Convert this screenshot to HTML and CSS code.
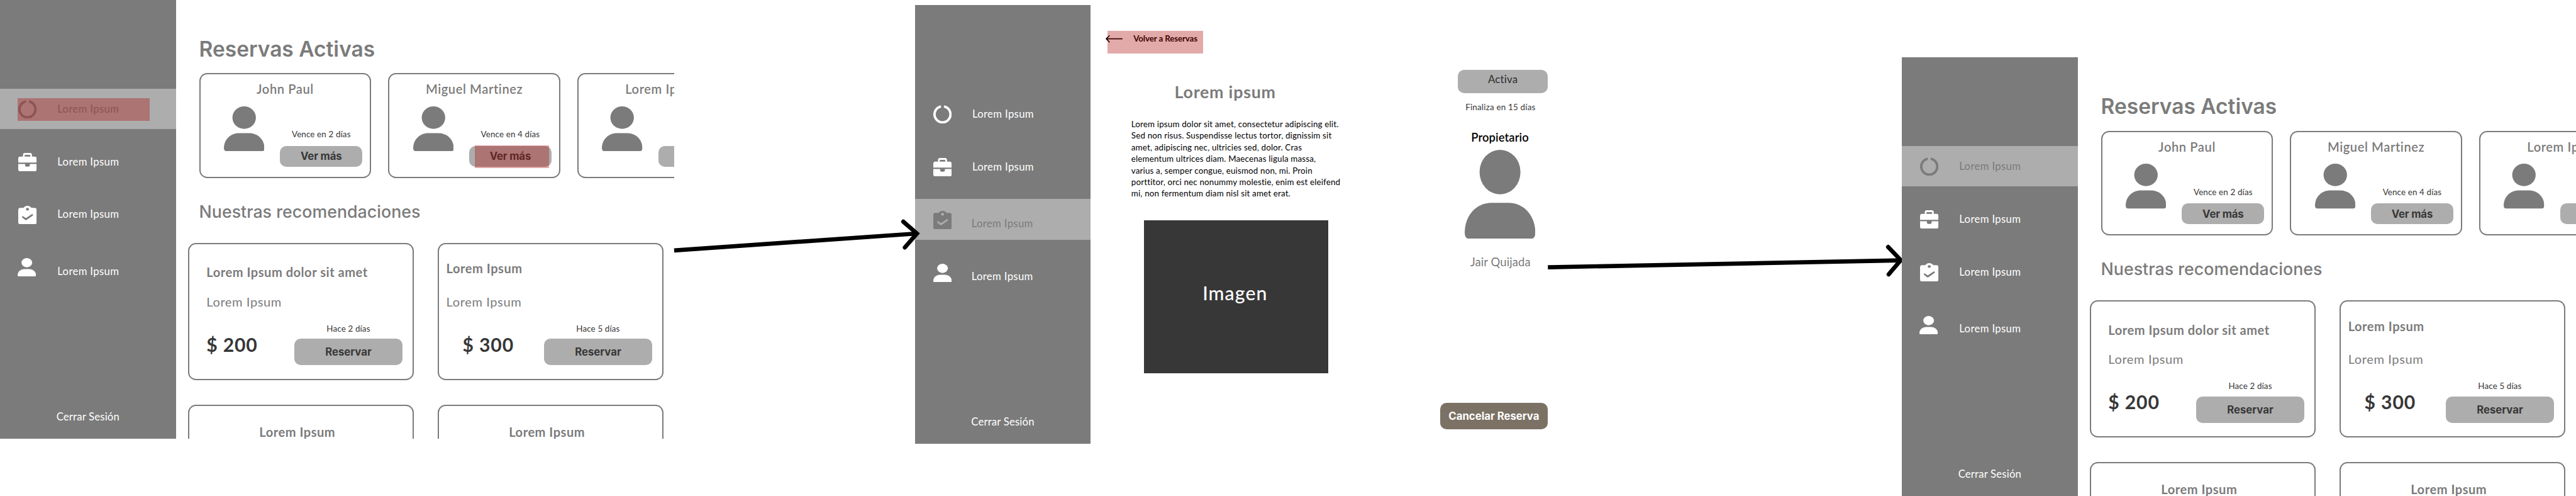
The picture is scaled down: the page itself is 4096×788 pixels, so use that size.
FILE: index.html
```html
<!DOCTYPE html>
<html lang="es">
<head>
<meta charset="utf-8">
<title>Reservas</title>
<link rel="stylesheet" href="styles.css">
</head>
<body>
<svg class="defs" aria-hidden="true">
  <symbol id="ring" viewBox="0 0 35 35"><path d="M12.7 3.1A15.2 15.2 0 1 0 22.3 3.1" fill="none" stroke="currentColor" stroke-width="4.6" stroke-linecap="round"/></symbol>
  <symbol id="case" viewBox="0 0 35 35"><path fill="currentColor" fill-rule="evenodd" d="M9 7V3.5Q9 0 12.5 0H22.5Q26 0 26 3.5V7H31Q35 7 35 11V18.3H0V11Q0 7 4 7ZM12.2 7H22.8V4.6Q22.8 3.6 21.8 3.6H13.2Q12.2 3.6 12.2 4.6ZM0 20.8H13V23Q13 26 16 26H19Q22 26 22 23V20.8H35V31Q35 35 31 35H4Q0 35 0 31Z"/></symbol>
  <symbol id="clip" viewBox="0 0 35 35"><path fill="currentColor" fill-rule="evenodd" d="M9.8 4C11.5 1.5 14 0 17.5 0S23.5 1.5 25.2 4H31Q35 4 35 8V31Q35 35 31 35H4Q0 35 0 31V8Q0 4 4 4ZM17.5 4A2.9 2.5 0 1 0 17.5 9A2.9 2.5 0 1 0 17.5 4ZM7.4 22.2C6.2 21 8 18.8 9.6 19.9L14.6 23.4L25.4 16.2C27.2 15 29.3 17.2 27.6 18.6L15.7 26.9Q14.6 27.7 13.5 26.8Z"/></symbol>
  <symbol id="person" viewBox="0 0 100 100" preserveAspectRatio="none"><g fill="currentColor"><ellipse cx="50" cy="25" rx="29" ry="25"/><path d="M0 93C0 74 16 59.5 38 59.5H62C84 59.5 100 74 100 93Q100 100 93 100H7Q0 100 0 93Z"/></g></symbol>
</svg>

<div class="board">
  <section class="frame home">
    <aside class="sidebar">
      <nav class="nav">
        <a class="item active marked"><svg class="icon"><use href="#ring"/></svg><span class="label">Lorem Ipsum</span></a>
        <a class="item"><svg class="icon"><use href="#case"/></svg><span class="label">Lorem Ipsum</span></a>
        <a class="item"><svg class="icon"><use href="#clip"/></svg><span class="label">Lorem Ipsum</span></a>
        <a class="item profile"><svg class="icon"><use href="#person"/></svg><span class="label">Lorem Ipsum</span></a>
      </nav>
      <a class="logout">Cerrar Sesión</a>
    </aside>
    <main class="feed">
      <h1 class="title">Reservas Activas</h1>
      <div class="bookings">
        <article class="booking">
          <h3 class="name">John Paul</h3>
          <div class="row"><svg class="avatar"><use href="#person"/></svg><div class="side"><span class="note">Vence en 2 días</span><span class="btn small">Ver más</span></div></div>
        </article>
        <article class="booking">
          <h3 class="name">Miguel Martinez</h3>
          <div class="row"><svg class="avatar"><use href="#person"/></svg><div class="side"><span class="note">Vence en 4 días</span><span class="btn small hot">Ver más</span></div></div>
        </article>
        <article class="booking">
          <h3 class="name">Lorem Ipsum</h3>
          <div class="row"><svg class="avatar"><use href="#person"/></svg><div class="side"><span class="btn small"></span></div></div>
        </article>
      </div>
      <h2 class="subtitle">Nuestras recomendaciones</h2>
      <div class="offers">
        <article class="offer">
          <h3 class="offer-title">Lorem Ipsum dolor sit amet</h3>
          <p class="offer-text">Lorem Ipsum</p>
          <div class="offer-row"><span class="price">$ 200</span><div class="action"><span class="note">Hace 2 días</span><span class="btn">Reservar</span></div></div>
        </article>
        <article class="offer compact">
          <h3 class="offer-title">Lorem Ipsum</h3>
          <p class="offer-text">Lorem Ipsum</p>
          <div class="offer-row"><span class="price">$ 300</span><div class="action"><span class="note">Hace 5 días</span><span class="btn">Reservar</span></div></div>
        </article>
        <article class="offer next"><h3 class="offer-title">Lorem Ipsum</h3></article>
        <article class="offer next"><h3 class="offer-title">Lorem Ipsum</h3></article>
      </div>
    </main>
  </section>

  <section class="frame detail">
    <aside class="sidebar">
      <nav class="nav">
        <a class="item"><svg class="icon"><use href="#ring"/></svg><span class="label">Lorem Ipsum</span></a>
        <a class="item"><svg class="icon"><use href="#case"/></svg><span class="label">Lorem Ipsum</span></a>
        <a class="item active low"><svg class="icon"><use href="#clip"/></svg><span class="label">Lorem Ipsum</span></a>
        <a class="item low"><svg class="icon"><use href="#person"/></svg><span class="label">Lorem Ipsum</span></a>
      </nav>
      <a class="logout">Cerrar Sesión</a>
    </aside>
    <main class="post">
      <a class="back"><svg class="back-arrow" viewBox="0 0 32 16"><path d="M32 8H1.5M7.5 1.5L1.2 8L7.5 14.5" fill="none" stroke="currentColor" stroke-width="2"/></svg><span class="back-text">Volver a Reservas</span></a>
      <h1 class="post-title">Lorem ipsum</h1>
      <p class="post-text">Lorem ipsum dolor sit amet, consectetur adipiscing elit.<br>Sed non risus. Suspendisse lectus tortor, dignissim sit<br>amet, adipiscing nec, ultricies sed, dolor. Cras<br>elementum ultrices diam. Maecenas ligula massa,<br>varius a, semper congue, euismod non, mi. Proin<br>porttitor, orci nec nonummy molestie, enim est eleifend<br>mi, non fermentum diam nisl sit amet erat.</p>
      <div class="picture"><span>Imagen</span></div>
    </main>
    <aside class="owner">
      <span class="status">Activa</span>
      <span class="until">Finaliza en 15 días</span>
      <span class="role">Propietario</span>
      <svg class="portrait"><use href="#person"/></svg>
      <span class="owner-name">Jair Quijada</span>
      <span class="cancel">Cancelar Reserva</span>
    </aside>
  </section>

  <section class="frame home after">
    <aside class="sidebar">
      <nav class="nav">
        <a class="item active"><svg class="icon"><use href="#ring"/></svg><span class="label">Lorem Ipsum</span></a>
        <a class="item"><svg class="icon"><use href="#case"/></svg><span class="label">Lorem Ipsum</span></a>
        <a class="item"><svg class="icon"><use href="#clip"/></svg><span class="label">Lorem Ipsum</span></a>
        <a class="item profile"><svg class="icon"><use href="#person"/></svg><span class="label">Lorem Ipsum</span></a>
      </nav>
      <a class="logout">Cerrar Sesión</a>
    </aside>
    <main class="feed">
      <h1 class="title">Reservas Activas</h1>
      <div class="bookings">
        <article class="booking">
          <h3 class="name">John Paul</h3>
          <div class="row"><svg class="avatar"><use href="#person"/></svg><div class="side"><span class="note">Vence en 2 días</span><span class="btn small">Ver más</span></div></div>
        </article>
        <article class="booking">
          <h3 class="name">Miguel Martinez</h3>
          <div class="row"><svg class="avatar"><use href="#person"/></svg><div class="side"><span class="note">Vence en 4 días</span><span class="btn small">Ver más</span></div></div>
        </article>
        <article class="booking">
          <h3 class="name">Lorem Ipsum</h3>
          <div class="row"><svg class="avatar"><use href="#person"/></svg><div class="side"><span class="btn small"></span></div></div>
        </article>
      </div>
      <h2 class="subtitle">Nuestras recomendaciones</h2>
      <div class="offers">
        <article class="offer">
          <h3 class="offer-title">Lorem Ipsum dolor sit amet</h3>
          <p class="offer-text">Lorem Ipsum</p>
          <div class="offer-row"><span class="price">$ 200</span><div class="action"><span class="note">Hace 2 días</span><span class="btn">Reservar</span></div></div>
        </article>
        <article class="offer compact">
          <h3 class="offer-title">Lorem Ipsum</h3>
          <p class="offer-text">Lorem Ipsum</p>
          <div class="offer-row"><span class="price">$ 300</span><div class="action"><span class="note">Hace 5 días</span><span class="btn">Reservar</span></div></div>
        </article>
        <article class="offer next"><h3 class="offer-title">Lorem Ipsum</h3></article>
        <article class="offer next"><h3 class="offer-title">Lorem Ipsum</h3></article>
      </div>
    </main>
  </section>

  <svg class="links" viewBox="0 0 4891 941" aria-hidden="true">
    <g fill="none" stroke="#000" stroke-width="8">
      <path d="M1280 475L1741 443"/>
      <path d="M1715 420.500L1741 443L1718 469.500" stroke-linecap="round"/>
      <path d="M2939 507L3609 494"/>
      <path d="M3585 468.500L3609 493.500L3586 520.500" stroke-linecap="round"/>
    </g>
  </svg>
</div>
</body>
</html>
```
FILE: styles.css
```css
/* 1rem is ten units of the board, which is 4891 units wide */
html { font-size: calc(100vw / 489.1); }
*, *::before, *::after { box-sizing: border-box; }
body { margin: 0; background: #fff; overflow: hidden; font-family: Lato, "Noto Sans", sans-serif; color: #373737; }
h1, h2, h3, p { margin: 0; }
svg { display: block; flex: none; }
.defs { position: absolute; width: 0; height: 0; }

.board { position: relative; display: flex; align-items: flex-start; width: 489.1rem; height: 94.1rem; overflow: hidden; }
.links { position: absolute; inset: 0; width: 100%; height: 100%; z-index: 1; }
.frame { display: flex; flex: none; width: 128rem; height: 83.2rem; overflow: hidden; background: #fff; }
.detail { width: 120.2rem; margin: 1rem 67.2rem 0 45.7rem; }
.after { margin-top: 10.9rem; position: relative; z-index: 2; }

/* Sidebar */
.sidebar { display: flex; flex-direction: column; justify-content: space-between; flex: none; width: 33.4rem; padding: 16.8rem 0 2.96rem; background: #7b7b7b; color: #fff; }
.nav { display: flex; flex-direction: column; gap: 2.3rem; }
.item { position: relative; display: flex; align-items: flex-start; height: 7.7rem; padding-left: 3.5rem; }
.active { background: #adadad; color: #7b7b7b; }
.icon { width: 3.5rem; height: 3.5rem; margin-top: 2.2rem; }
.label { margin: 2.64rem 0 0 3.9rem; font-size: 2rem; line-height: 2.4rem; letter-spacing: 0.02em; white-space: nowrap; }
.profile { padding-left: 3.3rem; }
.profile .label { margin: 3.44rem 0 0 4.1rem; }
.low .label { margin: 3.4rem 0 0 3.75rem; }
.logout { align-self: center; font-size: 2rem; line-height: 2.4rem; letter-spacing: 0.01em; }

/* Click targets */
.marked::after, .hot::after, .back::after { content: ""; position: absolute; background: rgba(172, 12, 8, 0.35); }
.marked::after { left: 3.3rem; top: 1.8rem; width: 25.1rem; height: 4.3rem; }
.hot::after { left: 1.1rem; top: -0.13rem; width: 14.1rem; height: 4.3rem; }
.back::after { inset: 0; }

/* Home */
.feed { flex: none; width: 94.6rem; overflow: hidden; padding: 6.87rem 0 0 2.3rem; color: #7b7b7b; }
.title, .subtitle { padding-left: 2.1rem; font-family: Inter, sans-serif; white-space: nowrap; }
.title { font-size: 4rem; line-height: 4.8rem; font-weight: 600; }
.subtitle { margin-top: 4.45rem; font-size: 3.2rem; line-height: 4rem; font-weight: 500; }
.bookings { display: flex; gap: 3.2rem; margin: 2.23rem 0 0 2.1rem; }
.booking, .offer { border: 2px solid #7b7b7b; border-radius: 1.5rem; }
.booking { flex: none; width: 32.7rem; height: 19.85rem; padding-top: 1.44rem; }
.name { font-size: 2.4rem; line-height: 2.8rem; font-weight: 600; letter-spacing: 0.03em; text-align: center; }
.row { display: flex; padding-left: 4.46rem; }
.avatar { width: 7.7rem; height: 8.53rem; margin-top: 1.79rem; }
.side { display: flex; flex-direction: column; justify-content: flex-end; gap: 1.21rem; width: 15.6rem; height: 13.22rem; margin-left: 3rem; }
.note { color: #373737; font-size: 1.6rem; line-height: 2rem; letter-spacing: 0.01em; text-align: center; }
.btn { position: relative; display: flex; align-items: center; justify-content: center; height: 5rem; border-radius: 1.2rem; background: #adadad; color: #373737; font: 700 2rem/2.4rem Inter, sans-serif; }
.small { height: 3.87rem; letter-spacing: -0.01em; }

.offers { display: grid; grid-template-columns: 42.9rem 42.9rem; grid-auto-rows: 26rem; gap: 4.7rem 4.5rem; margin-top: 3.9rem; }
.offer { padding: 3.96rem 1.96rem 0 3.26rem; }
.offer-title { font-size: 2.4rem; line-height: 2.8rem; font-weight: 700; letter-spacing: 0.026em; }
.offer-text { margin-top: 2.81rem; font-size: 2.4rem; line-height: 2.8rem; letter-spacing: 0.029em; }
.offer-row { display: flex; justify-content: space-between; align-items: flex-start; }
.price { margin-top: 4.48rem; color: #373737; font-size: 3.6rem; line-height: 4.4rem; font-weight: 700; letter-spacing: 0.028em; }
.action { display: flex; flex-direction: column; gap: 0.9rem; width: 20.5rem; margin-top: 2.69rem; }
.compact { padding: 3.26rem 1.96rem 0 1.4rem; }
.compact .offer-text { margin-top: 3.51rem; }
.compact .price { margin-left: 3.1rem; }
.next { padding: 3.56rem 1.4rem 0 0; text-align: center; }

/* Detail */
.post { display: flex; flex-direction: column; align-items: flex-start; width: 54rem; padding: 4.8rem 0 0 2.8rem; }
.back { position: relative; display: flex; align-items: flex-start; width: 18.1rem; height: 4.3rem; margin-left: 0.4rem; color: #000; }
.back-arrow { width: 3.2rem; height: 1.6rem; margin: 0.8rem 0 0 -0.4rem; }
.back-text { margin: 0.55rem 0 0 2.1rem; font-size: 1.6rem; line-height: 2rem; font-weight: 700; letter-spacing: -0.01em; white-space: nowrap; }
.post-title { margin: 5.47rem 0 0 13.1rem; color: #7b7b7b; font-size: 3.2rem; line-height: 4rem; font-weight: 700; letter-spacing: 0.029em; }
.post-text { margin: 2.88rem 0 0 4.9rem; color: #000; font-size: 1.6rem; line-height: 2.2rem; letter-spacing: 0.012em; white-space: nowrap; }
.picture { display: flex; align-items: center; justify-content: center; width: 35rem; height: 29rem; margin: 3.95rem 0 0 7.3rem; padding: 0 0.4rem 1.36rem 0; background: #373737; color: #fff; font-size: 3.6rem; line-height: 4.4rem; font-weight: 500; letter-spacing: 0.037em; }
.owner { display: flex; flex-direction: column; align-items: center; width: 17.1rem; margin-left: 15.7rem; padding-top: 12.2rem; white-space: nowrap; }
.status { width: 17.1rem; height: 4.5rem; padding-top: 0.69rem; border-radius: 1.2rem; background: #adadad; font-size: 2rem; line-height: 2.4rem; font-weight: 500; letter-spacing: 0.011em; text-align: center; }
.until { margin: 1.68rem 0.9rem 0 0; font-size: 1.6rem; line-height: 2rem; letter-spacing: 0.016em; }
.role { margin: 3.49rem 1.1rem 0 0; color: #000; font-size: 2.2rem; line-height: 2.6rem; font-weight: 600; letter-spacing: 0.005em; }
.portrait { width: 13.4rem; height: 16.9rem; margin: 0.9rem 1.1rem 0 0; color: #7b7b7b; }
.owner-name { margin: 3.23rem 0.9rem 0 0; color: #7b7b7b; font-size: 2.2rem; line-height: 2.6rem; letter-spacing: 0.006em; }
.cancel { display: flex; align-items: center; justify-content: center; align-self: flex-end; flex: none; width: 20.5rem; height: 5rem; margin-top: 25.37rem; border-radius: 1.2rem; background: #7b7265; color: #fff; font: 700 2rem/2.4rem Inter, sans-serif; }
```
